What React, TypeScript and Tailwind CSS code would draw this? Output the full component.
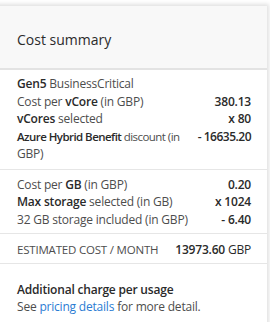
import React from "react";

function Row({ label, value }: { label: React.ReactNode; value: React.ReactNode }) {
  return (
    <div className="flex items-start justify-between leading-[17.5px]">
      <div className="flex-1 min-w-0">{label}</div>
      <div className="shrink-0 text-right font-semibold text-[#2a2a2a]">{value}</div>
    </div>
  );
}

const B = ({ children }: { children: React.ReactNode }) => (
  <span className="font-semibold text-[#2a2a2a]">{children}</span>
);

export default function App() {
  return (
    <div className="w-[270px] h-[322px] bg-white overflow-hidden font-['Open_Sans',sans-serif]">
      <div className="mt-[6px] mr-[3px] -ml-[10px] shadow-[0_0_4px_2px_rgba(0,0,0,0.12)] bg-white h-[330px] text-[12px] tracking-[-0.2px] text-[#4d4d4d]">
        <div className="h-[64px] bg-[#f8f8f8] border-b-2 border-[#e3e3e3] pl-[27px] pt-[24px]">
          <div className="text-[14px] leading-[20px] tracking-normal text-[#2b2b2b]">Cost summary</div>
        </div>
        <div className="pl-[27px] pr-[16px] pt-[5px] pb-[6px] border-b border-[#e6e6e6]">
          <div className="leading-[17.5px]">
            <B>Gen5</B> BusinessCritical
          </div>
          <Row label={<>Cost per <B>vCore</B> (in GBP)</>} value="380.13" />
          <Row label={<><B>vCores</B> selected</>} value="x 80" />
          <Row
            label={
              <>
                <span className="whitespace-nowrap text-[11.5px] tracking-[-0.55px]">
                  <B>Azure Hybrid Benefit</B> discount (in
                </span>
                <br />
                GBP)
              </>
            }
            value={<span className="tracking-[-0.5px]">- 16635.20</span>}
          />
        </div>
        <div className="pl-[27px] pr-[16px] pt-[6px] pb-[5px] border-b border-[#e6e6e6]">
          <Row label={<>Cost per <B>GB</B> (in GBP)</>} value="0.20" />
          <Row label={<><B>Max storage</B> selected (in GB)</>} value="x 1024" />
          <Row label={<>32 GB storage included (in GBP)</>} value="- 6.40" />
        </div>
        <div className="pl-[27px] pr-[16px] pt-[7px] pb-[4px] border-b border-[#e6e6e6]">
          <Row
            label={<span className="text-[11.5px]">ESTIMATED COST / MONTH</span>}
            value={<>13973.60 <span className="font-normal">GBP</span></>}
          />
        </div>
        <div className="pl-[27px] pr-[16px] pt-[17px] leading-[17.5px]">
          <div className="font-semibold text-[#2a2a2a]">Additional charge per usage</div>
          <div>
            See <span className="text-[#2b7cd3]">pricing details</span> for more detail.
          </div>
        </div>
      </div>
    </div>
  );
}
